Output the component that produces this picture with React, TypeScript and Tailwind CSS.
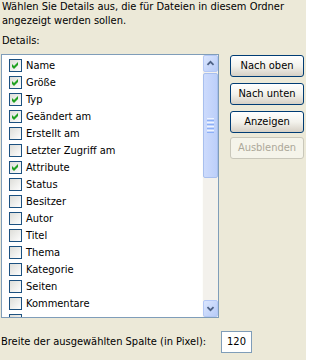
import React from "react";

const items: [string, boolean][] = [
  ["Name", true],
  ["Größe", true],
  ["Typ", true],
  ["Geändert am", true],
  ["Erstellt am", false],
  ["Letzter Zugriff am", false],
  ["Attribute", true],
  ["Status", false],
  ["Besitzer", false],
  ["Autor", false],
  ["Titel", false],
  ["Thema", false],
  ["Kategorie", false],
  ["Seiten", false],
  ["Kommentare", false],
  ["", false],
];

function Box({ checked }: { checked: boolean }) {
  return (
    <svg width="13" height="13" viewBox="0 0 13 13" className="shrink-0 block">
      <defs>
        <linearGradient id="cbg" x1="0" y1="0" x2="1" y2="1">
          <stop offset="0" stopColor="#dcdcd7" />
          <stop offset="1" stopColor="#ffffff" />
        </linearGradient>
      </defs>
      <rect x="0.5" y="0.5" width="12" height="12" fill="url(#cbg)" stroke="#1c5180" />
      {checked && <path d="M3 5 L5 7 L9 3 L9 6 L5 10 L3 8 Z" fill="#21a121" />}
    </svg>
  );
}

function Arrow({ up }: { up: boolean }) {
  return (
    <svg width="15" height="17" viewBox="0 0 15 17" className="block">
      <path
        d={up ? "M4 10 L7.5 6.5 L11 10" : "M4 7 L7.5 10.5 L11 7"}
        fill="none"
        stroke="#4d6185"
        strokeWidth="2"
      />
    </svg>
  );
}

function Btn({ label, disabled, className }: { label: string; disabled?: boolean; className?: string }) {
  return (
    <div
      className={
        "h-[22px] w-[74px] rounded-[3px] border flex items-center justify-center " +
        (disabled
          ? "border-[#c9c7ba] bg-[#f5f4ea] text-[#aca899] "
          : "border-[#003c74] bg-gradient-to-b from-[#ffffff] via-[#f3f2ec] to-[#d6d0c5] text-black ") +
        (className ?? "")
      }
    >
      {label}
    </div>
  );
}

export default function App() {
  return (
    <div className="w-[306px] h-[360px] bg-[#ece9d8] overflow-hidden text-[11px] leading-[14px] text-black font-['DejaVu_Sans_Condensed','Liberation_Sans',sans-serif]">
      <div className="pl-[2px]">
        <div>Wählen Sie Details aus, die für Dateien in diesem Ordner</div>
        <div>angezeigt werden sollen.</div>
        <div className="mt-[6px]">Details:</div>
      </div>
      <div className="flex mt-[6px]">
        <div className="ml-[1px] w-[218px] h-[264px] border border-[#7f9db9] bg-white flex overflow-hidden">
          <div className="flex-1 pt-[2px] overflow-hidden">
            {items.map(([name, checked], i) => (
              <div key={i} className="h-[17px] flex items-center pl-[7px]">
                <Box checked={checked} />
                {name && <span className="ml-[4px] whitespace-nowrap">{name}</span>}
              </div>
            ))}
          </div>
          <div className="w-[16px] bg-[#f3f1ec] border-l border-l-[#fdfdfb] flex flex-col">
            <div className="h-[17px] rounded-[2px] border border-[#b4c8f6] bg-gradient-to-br from-[#dbe6fe] to-[#b7cbf7] flex items-center justify-center">
              <Arrow up />
            </div>
            <div className="h-[105px] mt-[1px] rounded-[2px] border border-[#a8bfee] bg-gradient-to-r from-[#cddbfc] to-[#bccffa] flex flex-col items-center justify-center gap-[1px]">
              <div className="w-[7px] h-[1px] bg-[#eef4fe]" />
              <div className="w-[7px] h-[1px] bg-[#8cb0f8]" />
              <div className="w-[7px] h-[1px] bg-[#eef4fe]" />
              <div className="w-[7px] h-[1px] bg-[#8cb0f8]" />
              <div className="w-[7px] h-[1px] bg-[#eef4fe]" />
              <div className="w-[7px] h-[1px] bg-[#8cb0f8]" />
              <div className="w-[7px] h-[1px] bg-[#eef4fe]" />
              <div className="w-[7px] h-[1px] bg-[#8cb0f8]" />
            </div>
            <div className="flex-1" />
            <div className="h-[17px] rounded-[2px] border border-[#b4c8f6] bg-gradient-to-br from-[#dbe6fe] to-[#b7cbf7] flex items-center justify-center">
              <Arrow up={false} />
            </div>
          </div>
        </div>
        <div className="ml-[11px] flex flex-col pt-[1px]">
          <Btn label="Nach oben" />
          <Btn label="Nach unten" className="mt-[6px]" />
          <Btn label="Anzeigen" className="mt-[6px]" />
          <Btn label="Ausblenden" disabled className="mt-[4px]" />
        </div>
      </div>
      <div className="flex items-center mt-[13px] pl-[1px]">
        <span className="w-[220px]">Breite der ausgewählten Spalte (in Pixel):</span>
        <div className="w-[31px] h-[22px] border border-[#7f9db9] bg-white flex items-center justify-center">
          120
        </div>
      </div>
    </div>
  );
}
